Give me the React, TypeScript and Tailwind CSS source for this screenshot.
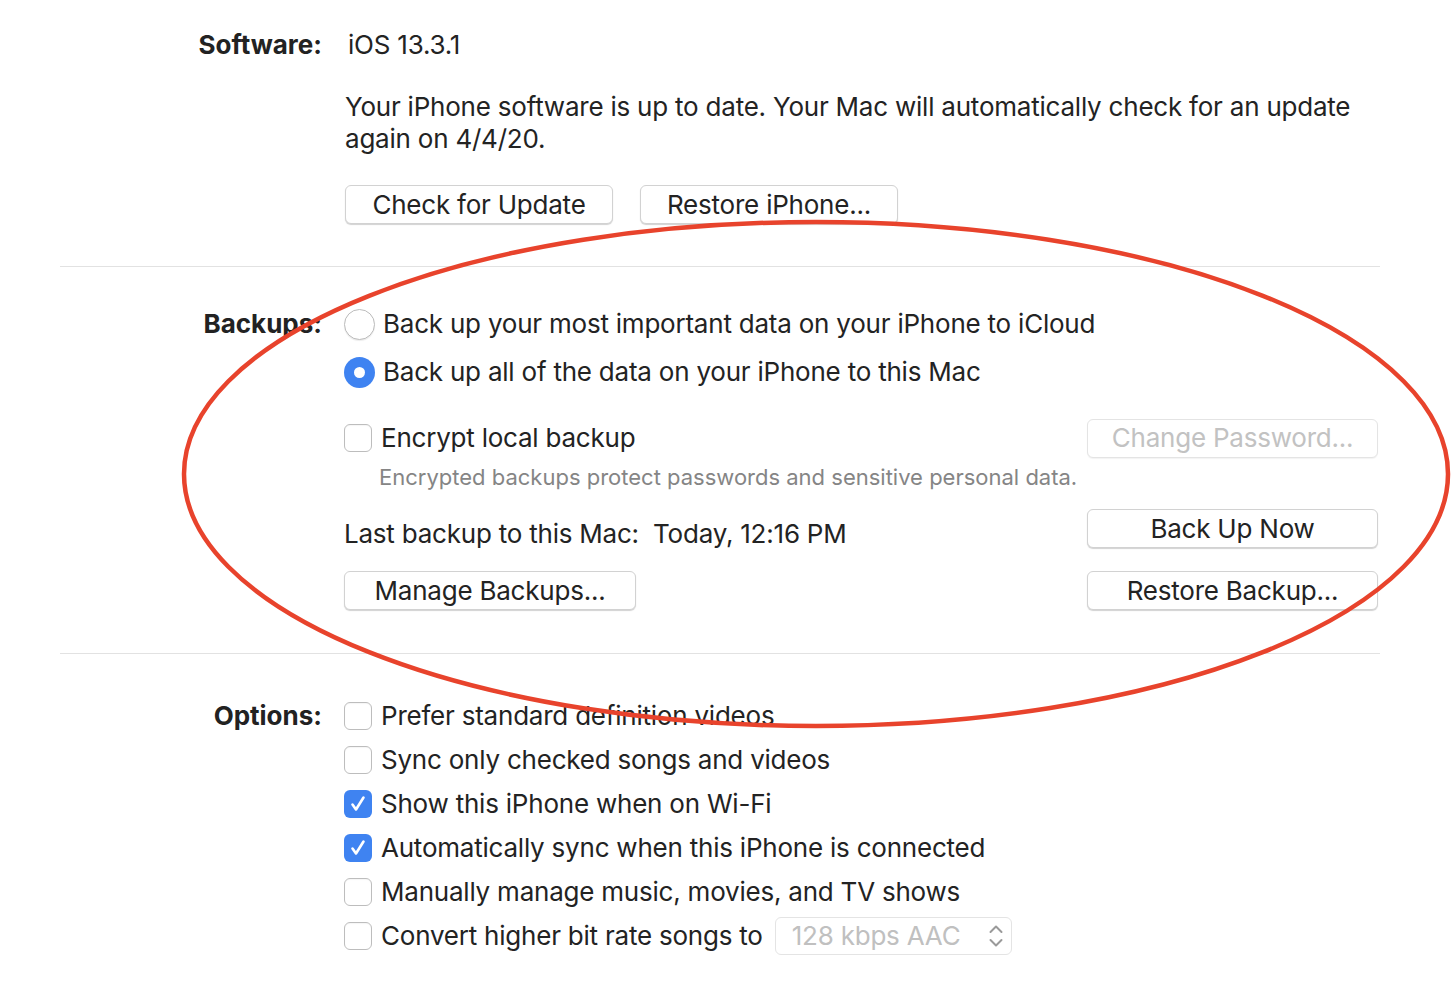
import type { ReactNode } from "react"

function Label({ children }: { children: ReactNode }) {
  return (
    <div className="w-[322px] shrink-0 text-right font-bold tracking-normal text-[#222]">{children}</div>
  )
}

function Button({
  children,
  width,
  disabled,
}: {
  children: ReactNode
  width: string
  disabled?: boolean
}) {
  return (
    <button
      className={
        width +
        " flex h-[39px] items-center justify-center rounded-[6px] border bg-white text-[26px] leading-none " +
        (disabled
          ? "border-[#e4e4e4] text-[#c2c2c2] shadow-[0_1px_1px_rgba(0,0,0,0.05)]"
          : "border-[#d2d2d2] text-[#232323] shadow-[0_1px_1px_rgba(0,0,0,0.18)]")
      }
    >
      {children}
    </button>
  )
}

function Checkbox({ checked }: { checked?: boolean }) {
  if (checked) {
    return (
      <div className="flex h-[28px] w-[28px] shrink-0 items-center justify-center rounded-[6px] bg-[#3f83f1]">
        <svg width="20" height="20" viewBox="0 0 20 20" fill="none">
          <path
            d="M4.5 10.5 L8 15.5 L15.5 3.5"
            stroke="white"
            strokeWidth="2.6"
            strokeLinecap="round"
            strokeLinejoin="round"
          />
        </svg>
      </div>
    )
  }
  return (
    <div className="h-[28px] w-[28px] shrink-0 rounded-[6px] border border-[#bdbdbd] bg-white shadow-[inset_0_1px_1px_rgba(0,0,0,0.04)]" />
  )
}

function Radio({ checked }: { checked?: boolean }) {
  if (checked) {
    return (
      <div className="flex h-[31px] w-[31px] shrink-0 items-center justify-center rounded-full bg-[#3f83f1]">
        <div className="h-[11px] w-[11px] rounded-full bg-white" />
      </div>
    )
  }
  return (
    <div className="h-[31px] w-[31px] shrink-0 rounded-full border border-[#bcbcbc] bg-white shadow-[0_1px_1px_rgba(0,0,0,0.08)]" />
  )
}

function CheckRow({ checked, children }: { checked?: boolean; children: ReactNode }) {
  return (
    <div className="flex h-[44px] items-center gap-[9px]">
      <Checkbox checked={checked} />
      <span>{children}</span>
    </div>
  )
}

const options = [
  { label: "Prefer standard definition videos", checked: false },
  { label: "Sync only checked songs and videos", checked: false },
  { label: "Show this iPhone when on Wi-Fi", checked: true },
  { label: "Automatically sync when this iPhone is connected", checked: true },
  { label: "Manually manage music, movies, and TV shows", checked: false },
]

export default function App() {
  return (
    <div className="relative min-h-[982px] w-full overflow-hidden bg-white font-['Inter','Liberation_Sans',sans-serif] text-[26px] leading-[32px] tracking-[-0.22px] text-[#232323]">
      {/* Software */}
      <div className="flex pt-[29px]">
        <Label>Software:</Label>
        <div className="ml-[23px] w-[1033px]">
          <div className="pl-[3px]">iOS 13.3.1</div>
          <p className="mt-[30px]">
            Your iPhone software is up to date. Your Mac will automatically check for an update
            again on 4/4/20.
          </p>
          <div className="mt-[30px] flex gap-[27px]">
            <Button width="w-[268px]">Check for Update</Button>
            <Button width="w-[258px]">Restore iPhone...</Button>
          </div>
        </div>
      </div>

      <div className="ml-[60px] mt-[42px] h-px w-[1320px] bg-[#e2e2e2]" />

      {/* Backups */}
      <div className="mt-[39px] flex">
        <div className="flex h-[36px] items-center">
          <Label>Backups:</Label>
        </div>
        <div className="ml-[22px] w-[1034px]">
          <div className="flex h-[36px] items-center gap-[8px]">
            <Radio />
            <span>Back up your most important data on your iPhone to iCloud</span>
          </div>
          <div className="mt-[12px] flex h-[36px] items-center gap-[8px]">
            <Radio checked />
            <span>Back up all of the data on your iPhone to this Mac</span>
          </div>
          <div className="mt-[29px] flex h-[38px] items-center justify-between">
            <div className="flex items-center gap-[9px]">
              <Checkbox />
              <span>Encrypt local backup</span>
            </div>
            <Button width="w-[291px]" disabled>
              Change Password...
            </Button>
          </div>
          <div className="mt-[6px] pl-[35px] text-[22px] leading-[28px] tracking-normal text-[#858585]">
            Encrypted backups protect passwords and sensitive personal data.
          </div>
          <div className="mt-[18px] flex items-start justify-between">
            <div className="pt-[9px]">
              Last backup to this Mac:&nbsp; Today, 12:16 PM
            </div>
            <Button width="w-[291px]">Back Up Now</Button>
          </div>
          <div className="mt-[21px] flex items-center justify-between">
            <Button width="w-[292px]">Manage Backups...</Button>
            <Button width="w-[291px]">Restore Backup...</Button>
          </div>
        </div>
      </div>

      <div className="ml-[60px] mt-[43px] h-px w-[1320px] bg-[#e2e2e2]" />

      {/* Options */}
      <div className="mt-[40px] flex">
        <div className="flex h-[44px] items-center">
          <Label>Options:</Label>
        </div>
        <div className="ml-[22px]">
          {options.map((o) => (
            <CheckRow key={o.label} checked={o.checked}>
              {o.label}
            </CheckRow>
          ))}
          <div className="flex h-[44px] items-center gap-[9px]">
            <Checkbox />
            <span>Convert higher bit rate songs to</span>
            <div className="ml-[3px] flex h-[38px] w-[237px] items-center justify-between rounded-[6px] border border-[#e4e4e4] bg-white pl-[16px] pr-[6px] text-[#c0c0c0]">
              <span>128 kbps AAC</span>
              <svg width="18" height="30" viewBox="0 0 18 30" fill="none">
                <path
                  d="M3.5 11 L9 5.5 L14.5 11 M3.5 19 L9 24.5 L14.5 19"
                  stroke="#9a9a9a"
                  strokeWidth="2"
                  strokeLinecap="round"
                  strokeLinejoin="round"
                />
              </svg>
            </div>
          </div>
        </div>
      </div>

      {/* annotation */}
      <svg
        className="pointer-events-none absolute left-0 top-0"
        width="1452"
        height="982"
        viewBox="0 0 1452 982"
      >
        <ellipse cx="816" cy="474" rx="632" ry="252" fill="none" stroke="#e8432c" strokeWidth="4.5" />
      </svg>
    </div>
  )
}
